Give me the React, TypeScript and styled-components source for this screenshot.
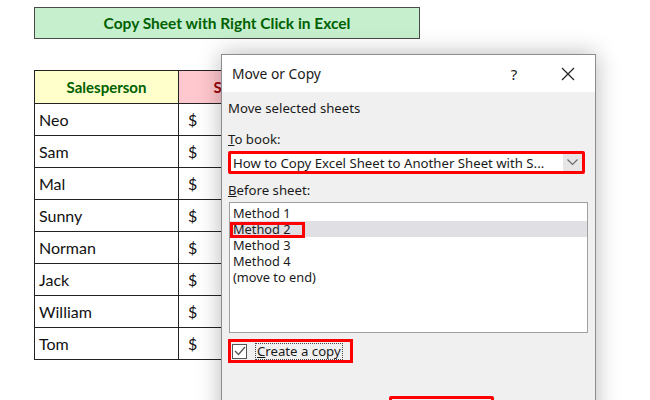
import React from 'react';
import styled, { createGlobalStyle } from 'styled-components';

const people = ['Neo', 'Sam', 'Mal', 'Sunny', 'Norman', 'Jack', 'William', 'Tom'];
const sheets = ['Method 1', 'Method 2', 'Method 3', 'Method 4', '(move to end)'];

export default function App() {
  return (
    <Page>
      <GlobalStyle />
      <TitleBox>Copy Sheet with Right Click in Excel</TitleBox>

      <SalesTable>
        <thead>
          <tr>
            <HeadCell $tone="name">Salesperson</HeadCell>
            <HeadCell $tone="sales">Sales</HeadCell>
          </tr>
        </thead>
        <tbody>
          {people.map((name) => (
            <tr key={name}>
              <NameCell>{name}</NameCell>
              <MoneyCell>$</MoneyCell>
            </tr>
          ))}
        </tbody>
      </SalesTable>

      <Dialog>
        <TitleBar>
          <DialogTitle>Move or Copy</DialogTitle>
          <TitleButton>?</TitleButton>
          <TitleButton>
            <svg width="14" height="14" viewBox="0 0 14 14">
              <path d="M1 1 L13 13 M13 1 L1 13" stroke="#222" strokeWidth="1.2" fill="none" />
            </svg>
          </TitleButton>
        </TitleBar>

        <DialogBody>
          <Label>Move selected sheets</Label>
          <FieldLabel>
            <u>T</u>o book:
          </FieldLabel>
          <Combo>
            <ComboText>How to Copy Excel Sheet to Another Sheet with S...</ComboText>
            <ComboArrow>
              <svg width="11" height="7" viewBox="0 0 11 7">
                <path d="M0.5 0.5 L5.5 5.5 L10.5 0.5" stroke="#666" strokeWidth="1.1" fill="none" />
              </svg>
            </ComboArrow>
          </Combo>

          <FieldLabel $gap={8}>
            <u>B</u>efore sheet:
          </FieldLabel>
          <SheetList>
            {sheets.map((s) => (
              <SheetItem key={s} $selected={s === 'Method 2'}>
                {s}
                {s === 'Method 2' && <Marker />}
              </SheetItem>
            ))}
          </SheetList>

          <CopyRow>
            <CheckBox>
              <svg width="12" height="10" viewBox="0 0 12 10">
                <path d="M1 5 L4.5 8.5 L11 1" stroke="#555" strokeWidth="1.3" fill="none" />
              </svg>
            </CheckBox>
            <CheckText>
              <u>C</u>reate a copy
            </CheckText>
          </CopyRow>

          <ButtonRow>
            <OkMarker />
          </ButtonRow>
        </DialogBody>
      </Dialog>
    </Page>
  );
}

const GlobalStyle = createGlobalStyle`
  body {
    margin: 0;
    background: #ffffff;
  }
`;

const Page = styled.div`
  position: relative;
  width: 650px;
  height: 400px;
  overflow: hidden;
  padding: 7px 0 0 34px;
  box-sizing: border-box;
  font-family: Lato, "Liberation Sans", sans-serif;
`;

const TitleBox = styled.div`
  width: 386px;
  height: 32px;
  box-sizing: border-box;
  border: 1px solid #4a4a4a;
  background: #c6efce;
  color: #006100;
  font-weight: 700;
  font-size: 15.5px;
  display: flex;
  align-items: center;
  justify-content: center;
`;

const SalesTable = styled.table`
  margin-top: 31px;
  border-collapse: collapse;
  font-size: 16px;
  color: #111;
`;

const HeadCell = styled.th<{ $tone: 'name' | 'sales' }>`
  height: 32px;
  padding: 0;
  border: 1px solid #222;
  font-weight: 700;
  font-size: 15px;
  text-align: center;
  width: ${(p) => (p.$tone === 'name' ? '143px' : '103px')};
  background: ${(p) => (p.$tone === 'name' ? '#ffffcc' : '#ffc7ce')};
  color: ${(p) => (p.$tone === 'name' ? '#006100' : '#9c0006')};
`;

const NameCell = styled.td`
  height: 31px;
  padding: 0 0 0 4px;
  border: 1px solid #222;
`;

const MoneyCell = styled.td`
  height: 31px;
  padding: 0 0 0 9px;
  border: 1px solid #222;
`;

const Dialog = styled.div`
  position: absolute;
  left: 221px;
  top: 54px;
  width: 375px;
  height: 380px;
  box-sizing: border-box;
  border: 1px solid #8c8c8c;
  background: #f0f0f0;
  box-shadow: 0 0 22px rgba(0, 0, 0, 0.28);
  font-family: "Noto Sans", "Open Sans", sans-serif;
  font-size: 13.2px;
  color: #1a1a1a;
`;

const TitleBar = styled.div`
  height: 37px;
  background: #ffffff;
  display: flex;
  align-items: center;
  padding: 0 20px 0 10px;
  gap: 40px;
`;

const DialogTitle = styled.div`
  flex: 1;
  font-size: 13.8px;
`;

const TitleButton = styled.div`
  display: flex;
  align-items: center;
  justify-content: center;
  font-size: 15px;
  width: 14px;
`;

const DialogBody = styled.div`
  padding: 8px 7px 0 6px;
  display: flex;
  flex-direction: column;
`;

const Label = styled.div`
  height: 17px;
  line-height: 17px;
`;

const FieldLabel = styled.div<{ $gap?: number }>`
  height: 17px;
  line-height: 17px;
  margin-top: ${(p) => p.$gap ?? 14}px;
  margin-bottom: 3px;
`;

const Combo = styled.div`
  height: 23px;
  box-sizing: border-box;
  border: 3px solid #ff0000;
  border-radius: 2px;
  background: #ffffff;
  display: flex;
  align-items: center;
  margin-right: 3px;
`;

const ComboText = styled.div`
  flex: 1;
  padding-left: 2px;
  white-space: nowrap;
  overflow: hidden;
`;

const ComboArrow = styled.div`
  width: 19px;
  height: 100%;
  background: #e6e6e6;
  display: flex;
  align-items: center;
  justify-content: center;
`;

const SheetList = styled.div`
  height: 131px;
  box-sizing: border-box;
  margin-left: 1px;
  border: 1px solid #a0a0a0;
  background: #ffffff;
  padding-top: 2px;
  font-size: 12.8px;
`;

const SheetItem = styled.div<{ $selected?: boolean }>`
  position: relative;
  height: 16px;
  line-height: 16px;
  padding-left: 3px;
  background: ${(p) => (p.$selected ? '#dfdfe4' : 'transparent')};
`;

const Marker = styled.span`
  position: absolute;
  left: 0;
  top: 1px;
  width: 75px;
  height: 16px;
  box-sizing: border-box;
  border: 3px solid #ff0000;
`;

const CopyRow = styled.div`
  margin-top: 6px;
  width: 125px;
  height: 24px;
  box-sizing: border-box;
  border: 3px solid #ff0000;
  display: flex;
  align-items: center;
  padding-left: 1px;
  gap: 8px;
`;

const CheckBox = styled.div`
  width: 13px;
  height: 13px;
  border: 1px solid #555;
  background: #ffffff;
  display: flex;
  align-items: center;
  justify-content: center;
`;

const CheckText = styled.span`
  border: 1px dotted #444;
  padding: 0 1px;
  line-height: 15px;
  white-space: nowrap;
`;

const ButtonRow = styled.div`
  display: flex;
  padding-left: 161px;
  margin-top: 33px;
`;

const OkMarker = styled.div`
  width: 105px;
  height: 28px;
  box-sizing: border-box;
  border: 3px solid #ff0000;
  border-radius: 2px;
`;
